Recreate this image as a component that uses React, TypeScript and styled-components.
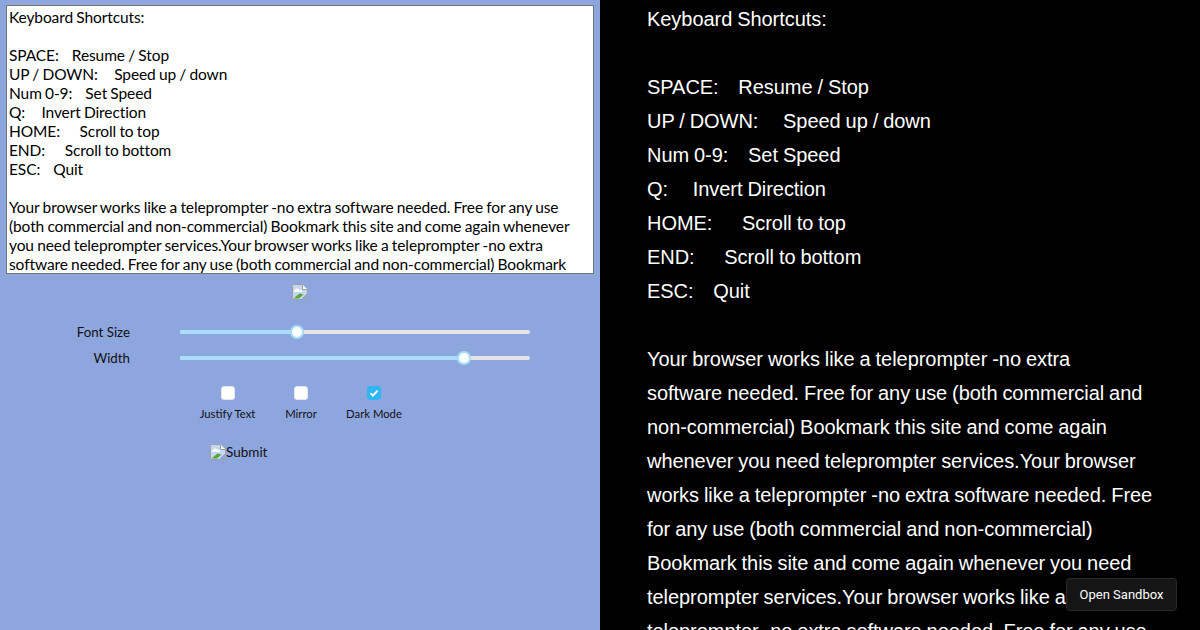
import styled, { createGlobalStyle } from 'styled-components'

const shortcuts = `Keyboard Shortcuts:

SPACE:    Resume / Stop
UP / DOWN:     Speed up / down
Num 0-9:    Set Speed
Q:     Invert Direction
HOME:      Scroll to top
END:      Scroll to bottom
ESC:    Quit

`

const blurb = 'Your browser works like a teleprompter -no extra software needed. Free for any use (both commercial and non-commercial) Bookmark this site and come again whenever you need teleprompter services.'

const editorText = shortcuts + blurb.repeat(3)
// the first wrap falls one word earlier in the reference than the font metrics give here
const previewText = shortcuts + blurb.repeat(3).replace('-no extra software', '-no extra\nsoftware')

const GlobalStyle = createGlobalStyle`
  html, body {
    margin: 0;
    height: 100%;
    overflow: hidden;
    background: #000;
  }
  #root {
    height: 100%;
  }
`

const Page = styled.div`
  display: flex;
  height: 630px;
  position: relative;
  overflow: hidden;
`

const Controls = styled.div`
  width: 600px;
  flex: none;
  box-sizing: border-box;
  padding: 5px 6px;
  background: #8ea6de;
  font-family: Lato, sans-serif;
  color: #111;
`

const Editor = styled.textarea`
  display: block;
  box-sizing: border-box;
  width: 588px;
  height: 269px;
  margin: 0;
  padding: 2px 2px;
  border: 1px solid #767676;
  background: #fff;
  color: #000;
  font-family: Lato, sans-serif;
  font-size: 15.5px;
  line-height: 19px;
  letter-spacing: -0.1px;
  word-spacing: -0.6px;
  resize: none;
  outline: none;
  overflow: hidden;
`

const Preview = styled.div`
  flex: 1;
  box-sizing: border-box;
  padding: 2px 45px 0 47px;
  background: #000;
  color: #fff;
  font-family: 'Liberation Sans', Arial, sans-serif;
  font-size: 20px;
  line-height: 34px;
  letter-spacing: -0.05px;
  word-spacing: -0.56px;
  white-space: pre-wrap;
`

const IconSlot = styled.div`
  display: flex;
  justify-content: center;
  height: 16px;
  margin: 10px 0 0;
`

const SliderRow = styled.div<{ $first?: boolean }>`
  display: flex;
  align-items: center;
  height: 26px;
  margin-top: ${p => (p.$first ? '19px' : '0')};
`

const SliderLabel = styled.span`
  width: 124px;
  flex: none;
  text-align: right;
  font-size: 13.3px;
`

const Track = styled.div`
  position: relative;
  width: 350px;
  height: 4px;
  margin-left: 50px;
  border-radius: 2px;
  background: #e4e4e4;
`

const Fill = styled.div`
  height: 100%;
  border-radius: 2px 0 0 2px;
  background: #a9def9;
`

const Thumb = styled.div`
  position: absolute;
  top: 50%;
  width: 10px;
  height: 10px;
  transform: translate(-50%, -50%);
  border: 2px solid #a9def9;
  border-radius: 50%;
  background: #fff;
`

const Options = styled.div`
  display: flex;
  margin: 15px 0 0 184px;
`

const Option = styled.label<{ $width: number }>`
  display: flex;
  flex-direction: column;
  align-items: center;
  width: ${p => p.$width}px;
  gap: 7px;
  font-size: 11.3px;
  line-height: 14px;
`

const Box = styled.span<{ $checked?: boolean }>`
  display: flex;
  align-items: center;
  justify-content: center;
  box-sizing: border-box;
  width: 14px;
  height: 14px;
  border-radius: 3px;
  background: ${p => (p.$checked ? '#2fb5f2' : '#fff')};
  border: 1px solid ${p => (p.$checked ? '#2fb5f2' : '#e8e8e8')};
`

const SubmitRow = styled.div`
  display: flex;
  align-items: center;
  margin: 23px 0 0 204px;
  height: 16px;
  font-size: 13.5px;
`

const SandboxButton = styled.div`
  position: absolute;
  right: 23px;
  bottom: 19px;
  box-sizing: border-box;
  width: 111px;
  height: 33px;
  display: flex;
  align-items: center;
  justify-content: center;
  border: 1px solid #2a2a2a;
  border-radius: 4px;
  background: #151515;
  color: #fff;
  font-family: Roboto, sans-serif;
  font-size: 13px;
`

const BrokenImage = () => (
  <svg width="16" height="16" viewBox="0 0 16 16">
    <path d="M0.5 15.5V0.5H10.5L15.5 5.5V9.5L9.5 15.5Z" fill="#c4d7f2" stroke="#a0a0a0" />
    <path d="M10.5 0.5V5.5H15.5" fill="#fff" stroke="#a0a0a0" />
    <path d="M2 7C3 4.5 6 3.5 7.5 6C9 5.5 10.5 6.5 10.5 8H2Z" fill="#fff" />
    <path d="M1.5 14.5L7.5 9.5L11.5 10.5L7 14.5Z" fill="#5aa63c" />
    <path d="M12 15.5H15.5V12" fill="none" stroke="#a0a0a0" />
  </svg>
)

const Check = () => (
  <svg width="10" height="10" viewBox="0 0 10 10">
    <path d="M1.5 5.2L4 7.6L8.6 2.6" fill="none" stroke="#fff" strokeWidth="2" />
  </svg>
)

const Slider = ({ label, value, first }: { label: string; value: number; first?: boolean }) => (
  <SliderRow $first={first}>
    <SliderLabel>{label}</SliderLabel>
    <Track>
      <Fill style={{ width: `${value}%` }} />
      <Thumb style={{ left: `${value}%` }} />
    </Track>
  </SliderRow>
)

export default function App() {
  return (
    <Page>
      <GlobalStyle />
      <Controls>
        <Editor readOnly spellCheck={false} defaultValue={editorText} />
        <IconSlot>
          <BrokenImage />
        </IconSlot>
        <Slider first label="Font Size" value={33.5} />
        <Slider label="Width" value={81} />
        <Options>
          <Option $width={75}>
            <Box />
            Justify Text
          </Option>
          <Option $width={72}>
            <Box />
            Mirror
          </Option>
          <Option $width={74}>
            <Box $checked>
              <Check />
            </Box>
            Dark Mode
          </Option>
        </Options>
        <SubmitRow>
          <BrokenImage />
          Submit
        </SubmitRow>
      </Controls>
      <Preview>{previewText}</Preview>
      <SandboxButton>Open Sandbox</SandboxButton>
    </Page>
  )
}
